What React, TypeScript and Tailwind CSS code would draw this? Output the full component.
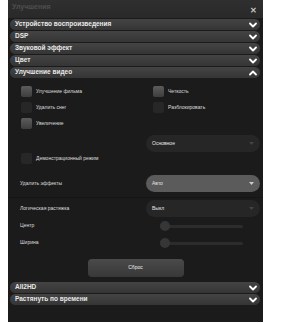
import React from 'react';

const font = { fontFamily: '"Liberation Sans", Arial, sans-serif' };

const Chevron: React.FC<{ up?: boolean }> = ({ up }) => (
  <svg width="8" height="6" viewBox="0 0 8 6" className={up ? 'rotate-180' : ''}>
    <path d="M1 1.5 L4 4.5 L7 1.5" fill="none" stroke="#fff" strokeWidth={1.8} strokeLinecap="round" strokeLinejoin="round" />
  </svg>
);

const Row: React.FC<{ title: string; open?: boolean }> = ({ title, open }) => (
  <div className="ml-[2px] mr-[3px] mb-[1px] h-[11px] rounded-full bg-gradient-to-b from-[#444] to-[#353535] flex items-center justify-between pl-[5px] pr-[3px]">
    <span className="text-[6.5px] font-bold text-[#e8e8e8] leading-none">{title}</span>
    <Chevron up={open} />
  </div>
);

const Check: React.FC<{ label: string; on?: boolean }> = ({ label, on }) => (
  <div className="flex items-center gap-[4px]">
    <div
      className={
        'w-[11px] h-[11px] rounded-[2px] ' +
        (on ? 'bg-gradient-to-b from-[#5c5c5c] to-[#3e3e3e]' : 'bg-[#272727]')
      }
    />
    <span className="text-[5px] text-[#ddd] leading-none">{label}</span>
  </div>
);

const Select: React.FC<{ value: string; light?: boolean }> = ({ value, light }) => (
  <div
    className={
      'w-[114px] h-[17px] rounded-full flex items-center justify-between pl-[6px] pr-[6px] ' +
      (light ? 'bg-[#5b5b5b]' : 'bg-[#262626]')
    }
  >
    <span className="text-[5px] text-[#e6e6e6] leading-none">{value}</span>
    <svg width="5" height="3" viewBox="0 0 5 3">
      <path d="M0 0 L5 0 L2.5 3 Z" fill={light ? '#ccc' : '#444'} />
    </svg>
  </div>
);

const Slider: React.FC = () => (
  <div className="relative w-[83px] h-[10px] flex items-center">
    <div className="w-full h-[3px] rounded-full bg-[#2c2c2c]" />
    <div className="absolute left-0 top-0 w-[10px] h-[10px] rounded-full bg-[#363636]" />
  </div>
);

const App: React.FC = () => {
  return (
    <div className="w-[303px] h-[323px] bg-white" style={font}>
      <div className="ml-[8px] w-[255px] h-[322px] bg-[#1b1b1b] flex flex-col">
        {/* header */}
        <div className="h-[18px] bg-gradient-to-b from-[#2f2f2f] to-[#292929] flex items-start justify-between pl-[4px] pr-[6px]">
          <span className="text-[7px] text-[#4f4f4f] font-bold mt-[2px]">Улучшения</span>
          <span className="text-[8px] text-[#c4c4c4] font-bold mt-[7px] leading-none">✕</span>
        </div>

        <div className="pt-[1px]">
          <Row title="Устройство воспроизведения" />
          <Row title="DSP" />
          <Row title="Звуковой эффект" />
          <Row title="Цвет" />
          <Row title="Улучшение видео" open />
        </div>

        {/* video section */}
        <div className="h-[203px] flex flex-col">
          <div className="pl-[13px] pt-[7px] grid grid-cols-[132px_1fr] gap-y-[5px]">
            <Check label="Улучшение фильма" on />
            <Check label="Четкость" on />
            <Check label="Удалить снег" />
            <Check label="Разблокировать" />
            <Check label="Увеличение" on />
          </div>
          <div className="flex justify-end pr-[3px] mt-[6px]">
            <Select value="Основное" />
          </div>
          <div className="pl-[13px] mt-[1px]">
            <Check label="Демонстрационный режим" />
          </div>
          <div className="flex items-center justify-between pl-[12px] pr-[3px] mt-[11px] pb-[5px] border-b border-[#151515]">
            <span className="text-[5px] text-[#ddd]">Удалить эффекты</span>
            <Select value="Авто" light />
          </div>
          <div className="flex items-center justify-between pl-[12px] pr-[3px] mt-[2px]">
            <span className="text-[5px] text-[#ddd]">Логическая растяжка</span>
            <Select value="Выкл" />
          </div>
          <div className="flex items-center pl-[12px] mt-[4px] h-[10px]">
            <span className="text-[5px] text-[#ddd] w-[140px]">Центр</span>
            <Slider />
          </div>
          <div className="flex items-center pl-[12px] mt-[7px] h-[10px]">
            <span className="text-[5px] text-[#ddd] w-[140px]">Ширина</span>
            <Slider />
          </div>
          <div className="flex justify-center mt-[11px]">
            <div className="w-[96px] h-[18px] rounded-[4px] bg-gradient-to-b from-[#4a4a4a] to-[#383838] flex items-center justify-center">
              <span className="text-[5px] text-[#eee]">Сброс</span>
            </div>
          </div>
        </div>

        <Row title="All2HD" />
        <Row title="Растянуть по времени" />
      </div>
    </div>
  );
};

export default App;
